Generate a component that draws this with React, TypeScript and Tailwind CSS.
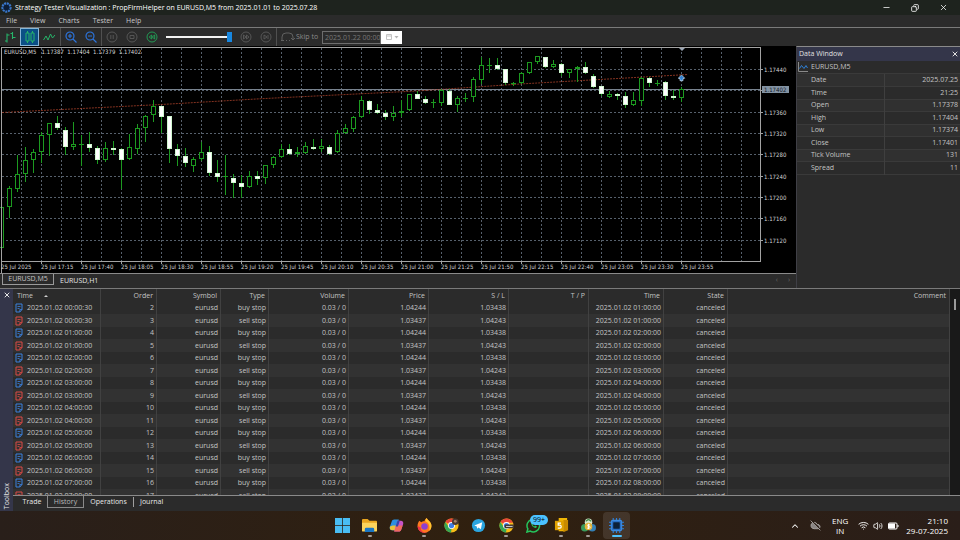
import type { ReactNode } from 'react';
import { clsx } from 'clsx';
import { ChevronUp, CloudOff, Copy, Minus, Volume2, Wifi, X } from 'lucide-react';

type Candle = [high: number, top: number, bottom: number, low: number, filled: 0 | 1];

// Offsets below the top of the price scale, three units to a pixel
const candles: Candle[] = [
    [487, 487, 610, 610, 0], [422, 430, 487, 518, 0], [330, 386, 433, 442, 0], [305, 346, 388, 410, 0],
    [312, 322, 346, 384, 0], [262, 271, 322, 355, 0], [235, 235, 271, 332, 0], [214, 235, 248, 256, 1],
    [247, 256, 305, 330, 1], [232, 298, 307, 314, 0], [270, 298, 298, 362, 0], [262, 297, 309, 322, 1],
    [303, 309, 345, 358, 1], [290, 310, 346, 352, 0], [288, 309, 313, 330, 1], [308, 312, 345, 433, 1],
    [268, 307, 343, 345, 0], [238, 250, 311, 328, 0], [210, 214, 250, 290, 0], [166, 184, 209, 230, 0],
    [183, 183, 216, 263, 1], [213, 213, 313, 354, 1], [298, 312, 332, 364, 1], [310, 332, 353, 366, 1],
    [335, 343, 364, 380, 0], [290, 322, 343, 348, 0], [303, 321, 384, 392, 1], [345, 383, 395, 412, 1],
    [330, 394, 394, 450, 0], [388, 399, 415, 458, 1], [390, 414, 425, 458, 1], [378, 394, 427, 430, 0],
    [378, 393, 401, 420, 1], [360, 360, 400, 418, 0], [332, 337, 361, 370, 0], [298, 312, 337, 340, 0],
    [298, 312, 327, 330, 1], [306, 322, 328, 336, 0], [290, 304, 325, 328, 0], [282, 305, 312, 316, 1],
    [282, 304, 313, 322, 0], [300, 306, 327, 330, 1], [254, 265, 322, 325, 0], [238, 250, 265, 268, 0],
    [214, 217, 251, 260, 0], [152, 166, 217, 220, 0], [166, 168, 194, 206, 1], [178, 195, 203, 208, 1],
    [194, 203, 217, 224, 1], [184, 203, 217, 228, 0], [164, 197, 202, 216, 0], [146, 148, 196, 198, 0],
    [138, 147, 161, 162, 1], [154, 161, 173, 176, 1], [162, 172, 172, 190, 0], [132, 136, 173, 184, 0],
    [132, 138, 179, 180, 1], [154, 160, 179, 202, 0], [144, 158, 158, 172, 0], [96, 103, 157, 170, 0],
    [36, 61, 106, 118, 0], [38, 61, 61, 84, 0], [40, 59, 72, 75, 1], [72, 72, 115, 120, 1],
    [110, 115, 115, 122, 0], [80, 85, 115, 116, 0], [50, 52, 85, 88, 0], [34, 34, 52, 56, 0],
    [36, 37, 66, 68, 1], [44, 58, 67, 70, 0], [55, 58, 84, 92, 1], [72, 73, 83, 98, 0],
    [62, 65, 73, 110, 0], [50, 66, 84, 86, 1], [88, 93, 125, 128, 1], [122, 124, 148, 154, 1],
    [138, 146, 155, 158, 0], [144, 147, 153, 164, 1], [142, 153, 181, 188, 1], [142, 166, 181, 184, 0],
    [96, 100, 167, 182, 0], [96, 99, 115, 126, 1], [104, 113, 113, 122, 0], [108, 111, 153, 164, 1],
    [135, 154, 158, 164, 1], [125, 133, 158, 170, 0],
];

const priceTicks: [number, string][] = [
    [23, '1.17440'], [44, ''], [66, '1.17360'], [87, '1.17320'], [108, '1.17280'],
    [130, '1.17240'], [151, '1.17200'], [172, '1.17160'], [194, '1.17120'],
];

const timeTicks = [
    '25 Jul 2025', '25 Jul 17:15', '25 Jul 17:40', '25 Jul 18:05', '25 Jul 18:30', '25 Jul 18:55',
    '25 Jul 19:20', '25 Jul 19:45', '25 Jul 20:10', '25 Jul 20:35', '25 Jul 21:00', '25 Jul 21:25',
    '25 Jul 21:50', '25 Jul 22:15', '25 Jul 22:40', '25 Jul 23:05', '25 Jul 23:30', '25 Jul 23:55',
];

const dataRows = [
    ['Date', '2025.07.25'],
    ['Time', '21:25'],
    ['Open', '1.17378'],
    ['High', '1.17404'],
    ['Low', '1.17374'],
    ['Close', '1.17401'],
    ['Tick Volume', '131'],
    ['Spread', '11'],
];

const hour = (n: number) => `2025.01.02 0${n}:00:00`;

const orders = Array.from({ length: 16 }, (_, i) => {
    const h = Math.floor(i / 2);
    const buy = i % 2 === 0;
    return {
        id: i + 2,
        buy,
        opened: h === 0 ? '2025.01.02 00:00:30' : hour(h),
        type: buy ? 'buy stop' : 'sell stop',
        price: buy ? '1.04244' : '1.03437',
        sl: buy ? '1.03438' : '1.04243',
        closed: hour(h + 1),
    };
});

const toY = (units: number) => Math.round(units / 3) - 1;

function Chart() {
    return (
        <svg viewBox="0 0 796 227" className="block h-auto w-full bg-black" role="img" aria-label="EURUSD,M5 chart">
            <g stroke="#56606c" strokeDasharray="2 2" shapeRendering="crispEdges">
                {Array.from({ length: 37 }, (_, i) => (
                    <line key={i} x1={21.5 + i * 20} x2={21.5 + i * 20} y1="2" y2="215" />
                ))}
                {priceTicks.map(([y]) => (
                    <line key={y} x1="2" x2="760" y1={y + 0.5} y2={y + 0.5} />
                ))}
            </g>
            <line x1="2" x2="760" y1="43.5" y2="43.5" stroke="#78838f" shapeRendering="crispEdges" />
            <polyline
                points="2,66.5 161,58.5 265,52.5 417,45 520,38 688,28.5"
                fill="none"
                stroke="#a53f28"
                strokeWidth="0.8"
                strokeDasharray="2 1"
            />
            <g shapeRendering="crispEdges" stroke="#1c9a20">
                {candles.map(([high, top, bottom, low, filled], i) => {
                    const x = 1 + i * 8;
                    const y1 = toY(top);
                    const y2 = toY(bottom);
                    return (
                        <g key={i}>
                            <line x1={x + 0.5} x2={x + 0.5} y1={toY(high)} y2={toY(low)} />
                            {y1 === y2 ? (
                                <line x1={x - 2} x2={x + 3} y1={y1 + 0.5} y2={y1 + 0.5} />
                            ) : (
                                <rect
                                    x={x - 1.5}
                                    y={y1 + 0.5}
                                    width="4"
                                    height={Math.max(y2 - y1 - 1, 1)}
                                    fill={filled ? '#ffffff' : '#000000'}
                                    stroke={filled ? '#d0f7d0' : undefined}
                                />
                            )}
                        </g>
                    );
                })}
            </g>
            <path d="M679 2h6l-3 3z" fill="#9aa5b4" />
            <path d="M681.500 29l3.200 3.200-1.700.5v2h-3v-2l-1.700-.5z" fill="#2f7fd0" stroke="#cfe2f5" strokeWidth="0.7" />
            <path
                d="M1.500 227V1.500H760.500V215.500H1.500"
                fill="none"
                stroke="#a3a3a3"
                shapeRendering="crispEdges"
            />
            <g fill="#d4d4d4" className="font-['DejaVu_Sans_Condensed','DejaVu_Sans',sans-serif] text-[6px]">
                <text x="4" y="8" xmlSpace="preserve">EURUSD,M5   1.17387  1.17404  1.17379  1.17402</text>
                {priceTicks.map(([y, label]) => (
                    <g key={y}>
                        <line x1="761" x2="763" y1={y + 0.5} y2={y + 0.5} stroke="#a3a3a3" />
                        <text x="764" y={y + 3}>{label}</text>
                    </g>
                ))}
                <rect x="762" y="40" width="27" height="7" fill="#8393a3" />
                <text x="764" y="46" fill="#111827">1.17402</text>
                {timeTicks.map((label, i) => (
                    <g key={label}>
                        <line x1={1.5 + i * 40} x2={1.5 + i * 40} y1="215" y2="218" stroke="#a3a3a3" />
                        <text x={1 + i * 40} y="223">{label}</text>
                    </g>
                ))}
            </g>
        </svg>
    );
}

function ToolButton({ label, active, children }: { label: string; active?: boolean; children: ReactNode }) {
    return (
        <button
            aria-label={label}
            className={clsx(
                'flex h-[18px] shrink-0 items-center justify-center',
                active ? 'w-[19px] border border-[#86b5d6] bg-[#0b4f86]' : 'w-5'
            )}
        >
            <svg viewBox="0 0 12 12" className="size-3" fill="none">
                {children}
            </svg>
        </button>
    );
}

function Round({ color, children }: { color: string; children: ReactNode }) {
    return (
        <g stroke={color} strokeWidth="0.9">
            <circle cx="6" cy="6" r="5" />
            {children}
        </g>
    );
}

const Separator = () => <span className="h-[18px] w-px shrink-0 bg-[#505050]" />;

function Toolbar() {
    return (
        <div className="flex h-[19px] shrink-0 items-center border-t border-[#7a7a7a]">
            <ToolButton label="Bar chart">
                <path d="M3 2.500v9M1 10h2M3 4h2.500M8.500 1v7M6.500 2.500h2M8.500 6.500h3" stroke="#27b36a" strokeWidth="1.100" />
            </ToolButton>
            <ToolButton label="Candlesticks" active>
                <path d="M3.500 0v2M3.500 10v2M8.500 0v2M8.500 10v2M2 2h3v8H2zM7 2h3v8H7z" stroke="#27b36a" />
            </ToolButton>
            <ToolButton label="Line chart">
                <path d="M.5 9L3 5l2 4 2.500-6 2 4L12 4" stroke="#27b36a" />
            </ToolButton>
            <span className="w-px" />
            <Separator />
            <ToolButton label="Zoom in">
                <path d="M8 8l3.500 3.500M3 5h4M5 3v4M5 1a4 4 0 100 8 4 4 0 000-8z" stroke="#2c74dc" strokeWidth="1.200" />
            </ToolButton>
            <ToolButton label="Zoom out">
                <path d="M8 8l3.500 3.500M3 5h4M5 1a4 4 0 100 8 4 4 0 000-8z" stroke="#2c74dc" strokeWidth="1.200" />
            </ToolButton>
            <Separator />
            <ToolButton label="Pause">
                <Round color="#5a5a5a"><path d="M4.800 4v4M7.200 4v4" /></Round>
            </ToolButton>
            <ToolButton label="Stop">
                <Round color="#5a5a5a"><path d="M4 4.500h4v3H4z" /></Round>
            </ToolButton>
            <ToolButton label="Slower">
                <Round color="#21a558"><path d="M5.700 4L3.200 6l2.500 2zM8.700 4L6.200 6l2.500 2z" /></Round>
            </ToolButton>
            <input
                type="range"
                aria-label="Speed"
                defaultValue={100}
                className="mx-1 h-[2px] w-[66px] shrink-0 appearance-none bg-[#f2f2f2] [&::-webkit-slider-thumb]:h-[10px] [&::-webkit-slider-thumb]:w-[5px] [&::-webkit-slider-thumb]:appearance-none [&::-webkit-slider-thumb]:bg-[#1787e0]"
            />
            <ToolButton label="Faster">
                <Round color="#5a5a5a"><path d="M3.500 4L6 6 3.500 8zM6.500 4L9 6 6.500 8z" /></Round>
            </ToolButton>
            <ToolButton label="To end">
                <Round color="#5a5a5a"><path d="M4 4l3 2-3 2zM8 4v4" /></Round>
            </ToolButton>
            <Separator />
            <label className="flex shrink-0 items-center text-[#8a8a8a]">
                <svg viewBox="0 0 14 12" className="mr-px ml-1 h-3 w-[14px]" fill="none" stroke="#606060">
                    <path d="M1 9V6a4 4 0 014-4h3a4 4 0 014 4v2M10 7l2 2 2-2M0 9.500h3M5 9.500h1M8 9.500h1" />
                </svg>
                Skip to
                <input
                    type="text"
                    defaultValue="2025.01.22 00:00"
                    className="ml-1 h-[13px] w-[59px] border border-[#6d6d6d] bg-transparent pl-[2px] text-[#777777] outline-none"
                />
            </label>
            <button aria-label="Pick a date" className="flex h-[13px] w-[21px] shrink-0 items-center justify-center bg-white">
                <svg viewBox="0 0 14 8" className="h-2 w-[14px]" fill="none" stroke="#c4c4c4">
                    <path d="M1.500 1.500h5v5h-5zM1.500 3h5" />
                    <path d="M9.500 3h4l-2 2.500z" fill="#b5b5b5" stroke="none" />
                </svg>
            </button>
        </div>
    );
}

function DataWindow() {
    return (
        <aside className="w-[164px] shrink-0 border-t border-l border-[#3f3f46] border-t-[#8a8a8a]">
            <div className="flex h-[14px] items-center justify-between bg-[#34364a] pr-px pl-[2px] text-[#e0e0e0]">
                <h2>Data Window</h2>
                <button aria-label="Close data window"><X className="size-2" strokeWidth={3} /></button>
            </div>
            <div className="flex h-[13px] items-center gap-[3px] border-b border-[#3a3a3a] bg-[#2b2b2b] pl-px">
                <svg viewBox="0 0 10 10" className="size-[10px]" fill="none">
                    <path d="M.5 0v9.500H10" stroke="#8a8a8a" />
                    <path d="M1.500 6.500l2-3 2.500 3 2-3 1.500 2.500" stroke="#2f80d8" />
                </svg>
                EURUSD,M5
            </div>
            <table className="w-full table-fixed border-collapse">
                <tbody>
                    {dataRows.map(([name, value]) => (
                        <tr key={name} className="h-3 border-b border-[#3a3a3a] odd:bg-[#303030] even:h-[13px]">
                            <th scope="row" className="w-[87px] border-r border-[#3f3f3f] p-0 pl-[14px] text-left font-normal">{name}</th>
                            <td className="p-0 pr-[2px] text-right">{value}</td>
                        </tr>
                    ))}
                </tbody>
            </table>
        </aside>
    );
}

function OrderIcon({ buy }: { buy: boolean }) {
    return (
        <svg viewBox="0 0 8 10" className="h-[10px] w-2 shrink-0" fill="none" stroke={buy ? '#3b82e0' : '#dc4a46'}>
            <path d="M1 1h6v5.500L4.800 9H1z" />
            <path d="M2.500 3.500h3M2.500 5.500h2M4.800 9V6.500H7" strokeWidth="0.8" />
        </svg>
    );
}

const columns = [
    { name: 'Order', width: 'w-[56px]' },
    { name: 'Symbol', width: 'w-[64px]' },
    { name: 'Type', width: 'w-[48px]' },
    { name: 'Volume', width: 'w-[80px]' },
    { name: 'Price', width: 'w-[80px]' },
    { name: 'S / L', width: 'w-[80px]' },
    { name: 'T / P', width: 'w-[80px]' },
    { name: 'Time', width: 'w-[75px]' },
    { name: 'State', width: 'w-[64px]' },
    { name: 'Comment', width: '' },
];

function OrdersTable() {
    return (
        <table className="w-full table-fixed border-separate border-spacing-0 text-right [&_td]:border-r [&_td]:border-[#414141] [&_td]:p-0 [&_td]:pr-[2px] [&_th]:border-r [&_th]:border-[#414141] [&_th]:p-0 [&_th]:pr-[3px] [&_th]:font-normal">
            <thead>
                <tr className="h-[13px]">
                    <th className="w-[88px]">
                        <div className="flex items-center gap-[11px] pl-1">
                            Time
                            <svg viewBox="0 0 4 2" className="h-0.5 w-1"><path d="M0 2h4L2 0z" fill="#d0d0d0" /></svg>
                        </div>
                    </th>
                    {columns.map((c) => (
                        <th key={c.name} className={c.width}>{c.name}</th>
                    ))}
                </tr>
            </thead>
            <tbody>
                {orders.map((o) => (
                    <tr key={o.id} className="h-3 even:h-[13px] even:bg-[#323232]">
                        <td>
                            <div className="flex items-center gap-1 pl-[2px]">
                                <OrderIcon buy={o.buy} />
                                {o.opened}
                            </div>
                        </td>
                        <td>{o.id}</td>
                        <td>eurusd</td>
                        <td>{o.type}</td>
                        <td>0.03 / 0</td>
                        <td>{o.price}</td>
                        <td>{o.sl}</td>
                        <td />
                        <td>{o.closed}</td>
                        <td>canceled</td>
                        <td />
                    </tr>
                ))}
            </tbody>
        </table>
    );
}

function Toolbox() {
    return (
        <section className="flex min-h-0 flex-1 border-t border-[#7a7a7a]">
            <div className="flex w-[13px] shrink-0 flex-col items-center justify-between bg-[#34364a] py-[2px] text-[#e5e5e5]">
                <button aria-label="Close toolbox"><X className="size-2" strokeWidth={3} /></button>
                <span className="rotate-180 [writing-mode:vertical-rl]">Toolbox</span>
            </div>
            <div className="flex min-w-0 flex-1 flex-col">
                <div className="flex min-h-0 flex-1 overflow-hidden">
                    <div className="min-w-0 flex-1 overflow-hidden"><OrdersTable /></div>
                    <div className="flex w-[10px] shrink-0 justify-center bg-[#191919]">
                        <span className="mt-[10px] h-[11px] w-0.5 bg-[#9a9a9a]" />
                    </div>
                </div>
                <nav className="flex h-4 shrink-0 items-start border-t border-[#8a8a8a] text-[#e8e8e8]">
                    <button className="h-3 w-[34px] pl-1">Trade</button>
                    <button className="h-3 w-[37px] border border-t-0 border-[#8a8a8a] text-[#b8b8b8]">History</button>
                    <button className="h-3 w-[49px]">Operations</button>
                    <button className="my-px h-[10px] border-l border-[#a0a0a0] pl-[6px]">Journal</button>
                </nav>
            </div>
        </section>
    );
}

const apps: { name: string; running?: boolean; active?: boolean; art: ReactNode }[] = [
    {
        name: 'Start',
        art: <path d="M0 0h7.600v7.600H0zM8.400 0H16v7.600H8.400zM0 8.400h7.600V16H0zM8.400 8.400H16V16H8.400z" fill="#49bdf3" />,
    },
    {
        name: 'File Explorer',
        running: true,
        art: (
            <>
                <path d="M0 2a1 1 0 011-1h5l2 2h7a1 1 0 011 1v9H0z" fill="#e9a51f" />
                <path d="M0 5h16v8.500a1 1 0 01-1 1H1a1 1 0 01-1-1z" fill="#fbd35c" />
                <path d="M3 15v-3a1.500 1.500 0 011.500-1.500h7A1.500 1.500 0 0113 12v3z" fill="#1976c5" />
            </>
        ),
    },
    {
        name: 'Copilot',
        art: (
            <>
                <path d="M5.500 1.500h5L7 13H3.500C1 13 .3 11 1 9l2-5.500c.4-1.200 1.200-2 2.500-2z" fill="#2b8fe0" />
                <path d="M1 9c-.8 2.500.5 4 2.500 4H7l1.500-5H4z" fill="#e9c23a" />
                <path d="M9 3h3.500C15 3 15.700 5 15 7l-2 5.500c-.4 1.200-1.200 2-2.500 2h-5z" fill="#c653c8" />
                <path d="M8 8h6.500L13 12.500c-.4 1.200-1.200 2-2.500 2h-5z" fill="#f06a5c" />
                <path d="M9 3l-2 6h2.500l2-6z" fill="#3246a8" />
            </>
        ),
    },
    {
        name: 'Firefox',
        running: true,
        art: (
            <>
                <path d="M2.500 3l2 1.500C6 3.300 7 3.500 8 3.500 8 2 9.500.5 10.500 0c.2 2.300 4.900 3.500 4.900 8.500A7.400 7.400 0 01.6 8.500C.6 6 1.500 4.500 2.500 3z" fill="#ff7a1f" />
                <path d="M10.500 0c.2 2.300 4.900 3.500 4.900 8.500 0 2-1 4-2.400 5.200C14 9 13 5 9 3.500 8.800 2 9.700.7 10.500 0z" fill="#ffc52f" />
                <circle cx="8" cy="9" r="3.500" fill="#8e3fd1" />
                <path d="M.6 8.500A7.400 7.400 0 0011 15.300c-4 .7-7-1.300-7-5.300z" fill="#f0324b" />
            </>
        ),
    },
    {
        name: 'Chrome',
        art: (
            <>
                <ChromeMark />
                <circle cx="12" cy="4" r="3.500" fill="#4a3a33" />
                <circle cx="12" cy="3.500" r="1.500" fill="#a98469" />
            </>
        ),
    },
    {
        name: 'Telegram',
        art: (
            <>
                <circle cx="8" cy="8" r="7" fill="#2ba5e0" />
                <path d="M3.500 8l8.500-3.500-1.500 7.500-2.500-2-1.500 1.500-.3-2.500z" fill="#ffffff" />
            </>
        ),
    },
    {
        name: 'Chrome work profile',
        running: true,
        art: (
            <>
                <ChromeMark />
                <rect x="6" y="7" width="10" height="4" rx="1" fill="#413833" />
                <path d="M7.500 9h7" stroke="#d8d8d8" strokeWidth="1" />
            </>
        ),
    },
    {
        name: 'WhatsApp',
        art: (
            <>
                <path d="M1 15l1-3.500A6.700 6.700 0 114.600 14z" fill="none" stroke="#25c45c" strokeWidth="1.600" />
                <path d="M5.200 4.700c1 4.300 2.500 5.300 5.500 6l1-1.600-2-1-.9.900C7.800 8.500 7.300 8 7 7.100l.8-1-.9-1.800z" fill="#25c45c" />
            </>
        ),
    },
    {
        name: 'Sticky Notes',
        running: true,
        art: (
            <>
                <path d="M5 0h9v12l-2 2H5z" fill="#f2b705" />
                <path d="M10 2h5v11l-5 2z" fill="#c98a00" />
                <rect x="1" y="3" width="9" height="10" fill="#e0a100" />
                <path d="M7.500 5.500h-3v2.200h1.700c2 0 2 3 0 3H4" fill="none" stroke="#ffffff" strokeWidth="1.300" />
            </>
        ),
    },
    {
        name: 'MetaTrader',
        running: true,
        art: (
            <>
                <circle cx="8" cy="4.500" r="4" fill="#d8e8cf" />
                <circle cx="4" cy="10.500" r="4" fill="#3a9b5c" />
                <circle cx="12" cy="10.500" r="4" fill="#3580b5" />
                <circle cx="8" cy="9" r="4" fill="#e5b53a" />
                <path d="M9.500 7.300H7.300v1.500h1.400c1.500 0 1.500 2 0 2H6.500M8 6.200v5.600" fill="none" stroke="#ffffff" strokeWidth="1" />
                <path d="M5 3.500l3-2 3 2" fill="none" stroke="#498a4e" strokeWidth="1.500" />
            </>
        ),
    },
    { name: 'Strategy Tester', active: true, art: <ChipMark /> },
];

function ChromeMark() {
    return (
        <>
            <circle cx="8" cy="8" r="7.500" fill="#f9bd17" />
            <path d="M8 8L1.500 4.300A7.500 7.500 0 0114.500 4.300L15 5H8z" fill="#e8453a" />
            <path d="M8 8v3.500L7.500 15.500A7.500 7.500 0 011.500 4.200L5 9.500z" fill="#37a854" />
            <circle cx="8" cy="8" r="3.700" fill="#ffffff" />
            <circle cx="8" cy="8" r="2.800" fill="#3f7fe8" />
        </>
    );
}

function ChipMark() {
    return (
        <>
            <path
                d="M4.500 0v16M8 0v16M11.500 0v16M0 4.500h16M0 8h16M0 11.500h16"
                stroke="#2f7fd6"
                strokeWidth="1.200"
            />
            <rect x="2.500" y="2.500" width="11" height="11" rx="1.500" fill="#2a6fc4" stroke="#3b8be0" strokeWidth="1.200" />
            <rect x="4.500" y="4.500" width="7" height="7" rx="0.500" fill="#0c2038" />
        </>
    );
}

function Taskbar() {
    return (
        <footer className="grid h-[29px] shrink-0 grid-cols-[1fr_303px_1fr] items-center bg-linear-to-r from-[#291f1a] via-[#30200f] to-[#2a1e19] text-[8px] text-white">
            <div />
            <div className="flex h-full">
                {apps.map((app) => (
                    <button
                        key={app.name}
                        aria-label={app.name}
                        className={clsx(
                            'relative flex flex-1 items-center justify-center rounded',
                            app.active && 'm-px bg-white/10'
                        )}
                    >
                        <svg viewBox="0 0 16 16" className="mb-px size-[15px]">{app.art}</svg>
                        {app.name === 'WhatsApp' && (
                            <span className="absolute top-1 left-[10px] rounded-full bg-[#4cc2ff] px-[3px] text-[7px] leading-[10px] text-black">99+</span>
                        )}
                        {app.running && <span className="absolute bottom-[3px] h-0.5 w-1 rounded-full bg-[#a39c97]" />}
                        {app.active && <span className="absolute bottom-[2px] h-0.5 w-[10px] rounded-full bg-[#4cc2ff]" />}
                    </button>
                ))}
            </div>
            <div className="flex items-center justify-end pr-3 leading-[10px]">
                <ChevronUp className="mr-[10px] size-[10px]" strokeWidth={2.5} />
                <CloudOff className="mr-[11px] size-[11px] fill-[#8a8583] text-[#a8a3a1]" />
                <span className="mr-[10px] text-center">ENG<br />IN</span>
                <Wifi className="mr-1 size-[11px]" />
                <Volume2 className="mr-[5px] size-[10px]" />
                <svg viewBox="0 0 11 8" className="mr-[7px] h-2 w-[11px]">
                    <rect x="0.500" y="1" width="8.500" height="6" rx="1" fill="none" stroke="#ffffff" />
                    <path d="M1 1.500h6v5H1zM9.500 3h1v2h-1z" fill="#ffffff" />
                </svg>
                <time className="text-right">21:10<br />29-07-2025</time>
            </div>
        </footer>
    );
}

export default function App() {
    return (
        <div className="flex h-screen flex-col overflow-hidden bg-[#2b2b2b] font-['Open_Sans','Noto_Sans',sans-serif] text-[7px] leading-[10px] text-[#c4c4c4]">
            <header className="flex h-[15px] shrink-0 items-center justify-between bg-[#1e231e] pl-px text-white">
                <div className="flex items-center gap-[3px]">
                    <svg viewBox="0 0 16 16" className="size-[11px]">
                        <circle cx="8" cy="8" r="6" fill="#0c1d36" stroke="#3a78cc" strokeWidth="3" strokeDasharray="3 1" />
                    </svg>
                    <h1>Strategy Tester Visualization : PropFirmHelper on EURUSD,M5 from 2025.01.01 to 2025.07.28</h1>
                </div>
                <div className="flex gap-5 pr-3">
                    <button aria-label="Minimize"><Minus className="size-[9px]" /></button>
                    <button aria-label="Restore"><Copy className="size-2 -scale-x-100" strokeWidth={2.5} /></button>
                    <button aria-label="Close"><X className="size-[9px]" /></button>
                </div>
            </header>
            <nav className="flex h-3 shrink-0 items-center gap-[13px] pl-[6px] text-[#c8c8c8]">
                {['File', 'View', 'Charts', 'Tester', 'Help'].map((item) => (
                    <button key={item}>{item}</button>
                ))}
            </nav>
            <Toolbar />
            <main className="flex shrink-0">
                <div className="min-w-0 flex-1">
                    <Chart />
                    <div className="flex h-[15px] items-start border-t border-[#8a8a8a]">
                        <button className="ml-[2px] h-[11px] w-[52px] border border-t-0 border-[#9a9a9a]">EURUSD,M5</button>
                        <button className="ml-[6px] h-3 pt-px text-[#e5e5e5]">EURUSD,H1</button>
                        <span className="mt-px mr-[6px] ml-auto flex gap-[10px] text-[#6a6a6a]">
                            <button aria-label="Previous chart">‹</button>
                            <button aria-label="Next chart">›</button>
                        </span>
                    </div>
                </div>
                <DataWindow />
            </main>
            <Toolbox />
            <Taskbar />
        </div>
    );
}
